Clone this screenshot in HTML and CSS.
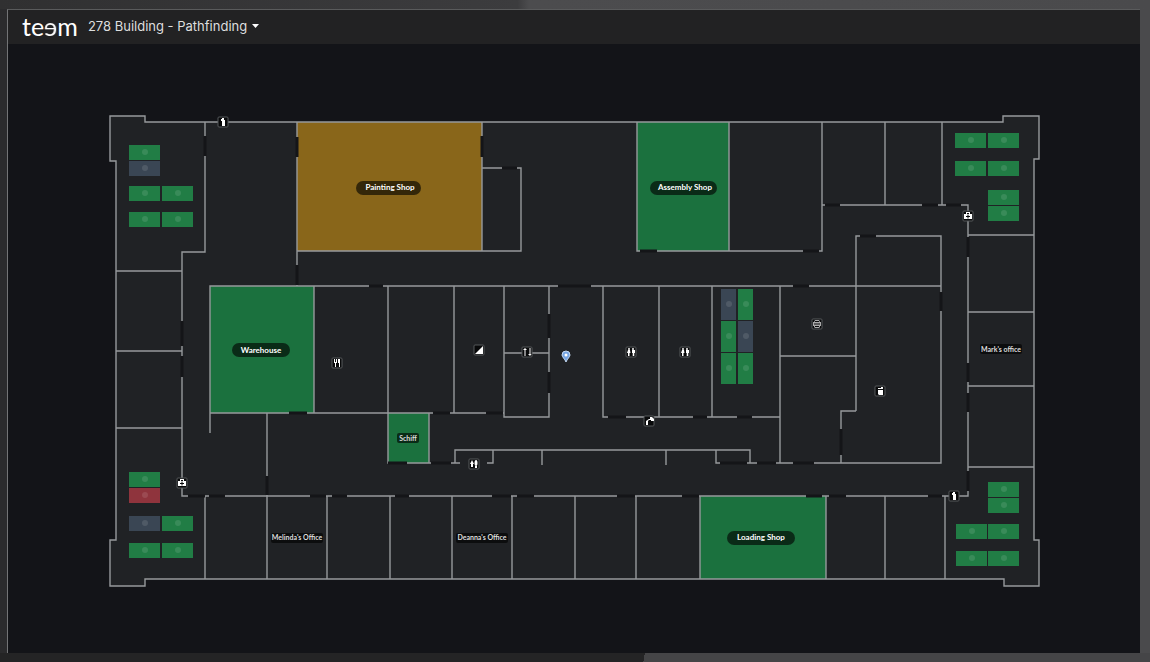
FILE: index.html
```
<!DOCTYPE html>
<html lang="en">
    <head>
        <meta charset="utf-8">
        <meta name="viewport" content="width=device-width">
        <title>278 Building - Pathfinding</title>
        <link rel="stylesheet" href="styles.css">
    </head>
    <body>
        <div class="screen">
            <header class="nav">
                <a class="logo" href="#">te<span class="turned">e</span>m</a>
                <button class="picker" type="button">278 Building - Pathfinding
                    <svg class="caret" width="7" height="4" viewBox="0 0 7 4"><path d="M0 0h7L3.500 4z"/></svg>
                </button>
            </header>
            <main class="map">
                <svg class="plan" viewBox="8 44 1132 609">
                    <defs>
                        <g id="desk"><rect width="31" height="15"/><circle class="seat" cx="16" cy="7" r="3"/></g>
                        <g id="desk-tall"><rect width="15" height="31"/><circle class="seat" cx="8" cy="15" r="3"/></g>
                        <rect id="box" class="box" x="-5" y="-5" width="10" height="10" rx="1"/>
                        <g id="wc">
                            <use href="#box"/>
                            <circle cx="-2" cy="-3" r="1"/><circle cx="2" cy="-3" r="1"/>
                            <path d="M-3-2h2l.5 3h-1v3h-1.500V1h-1zM1-2h3v3H3.300v3H1.700V1H1z"/>
                        </g>
                        <g id="aid">
                            <use href="#box"/>
                            <path d="M-4-2h2v-2h4v2h2v5h-8zM-1-3v1h2v-1z"/>
                            <path class="dark" d="M-.5-1.500h1v1.500h1.500v1H.5v1.500h-1V1H-2V0h1.500z"/>
                        </g>
                        <g id="extinguisher">
                            <use href="#box"/>
                            <path d="M-1-2h3v6h-3zM-1-4h2v2h-2zM-2-3h1v2h-1z"/>
                        </g>
                    </defs>

                    <path class="floor" d="M110 116H145V122H1003V116H1039V159H1034V540H1039V586H1004V579H145V586H110V540H116V161H110Z"/>

                    <!-- bookable rooms -->
                    <rect class="busy-soon" x="297" y="122" width="185" height="129"/>
                    <rect class="room" x="637" y="122" width="92" height="129"/>
                    <rect class="room" x="210" y="286" width="104" height="127"/>
                    <rect class="room" x="388" y="413" width="41" height="50"/>
                    <rect class="room" x="700" y="496" width="126" height="83"/>

                    <!-- walls -->
                    <path class="wall" d="M110 116H145V122H1003V116H1039V159H1034V540H1039V586H1004V579H145V586H110V540H116V161H110Z"/>
                    <path class="wall" d="M205 122V252H182V496H968V205H822M116 271H182M116 351H182M116 428H182
                        M297 122V286M482 122V251M297 251H521V168H482
                        M637 122V251H822V122M729 122V251M885 122V205M942 122V205
                        M968 235H1034M968 312H1034M968 386H1034M968 467H1034"/>
                    <path class="wall" d="M210 433V286H941M856 411V236H941V463H748M841 463V411H856M780 356H856
                        M314 286V413M210 413H504M267 413V496M388 286V463H460M429 413V463M454 286V413
                        M504 286V417H549V286M504 353H549M603 286V417H780M659 286V417M712 286V417M780 286V463
                        M455 463V450H750V463M493 450V463H487M542 450V465M666 450V465M716 450V463H748"/>
                    <path class="wall" d="M205 496V579M267 496V579M327 496V579M390 496V579M452 496V579M512 496V579M575 496V579
                        M636 496V579M700 496V579M826 496V579M885 496V579M945 496V579"/>

                    <!-- doors -->
                    <path class="door" d="M205 136V156M297 137V157M297 265V285M482 136V157M502 168H517M182 321V346M182 356V377
                        M640 251H657M803 251H819M825 205H840M922 205H938M946 205H961M860 236H876M941 292V311
                        M968 237V257M968 363V382M968 393V412M968 471V491M369 286H383M558 286H591M793 286H809
                        M289 413H307M433 413H450M486 413H503M267 476V495M549 314V338M549 372V393
                        M388 463H407M431 463H451M608 417H626M693 417H707M737 417H752M720 463H747M757 463H776M793 463H814M841 429V455
                        M188 496H205M209 496H225M310 496H326M332 496H347M395 496H409M492 496H511M517 496H534M617 496H635M682 496H699
                        M806 496H822M829 496H846M928 496H942"/>

                    <!-- desks -->
                    <g class="free">
                        <use href="#desk" x="129" y="145"/>
                        <use href="#desk" x="129" y="186"/><use href="#desk" x="162" y="186"/>
                        <use href="#desk" x="129" y="212"/><use href="#desk" x="162" y="212"/>
                        <use href="#desk" x="129" y="472"/>
                        <use href="#desk" x="162" y="516"/>
                        <use href="#desk" x="129" y="543"/><use href="#desk" x="162" y="543"/>
                        <use href="#desk" x="955" y="133"/><use href="#desk" x="988" y="133"/>
                        <use href="#desk" x="955" y="161"/><use href="#desk" x="988" y="161"/>
                        <use href="#desk" x="988" y="190"/><use href="#desk" x="988" y="206"/>
                        <use href="#desk" x="988" y="482"/><use href="#desk" x="988" y="498"/>
                        <use href="#desk" x="956" y="524"/><use href="#desk" x="988" y="524"/>
                        <use href="#desk" x="956" y="551"/><use href="#desk" x="988" y="551"/>
                        <use href="#desk-tall" x="738" y="289"/>
                        <use href="#desk-tall" x="721" y="321"/>
                        <use href="#desk-tall" x="721" y="353"/><use href="#desk-tall" x="738" y="353"/>
                    </g>
                    <g class="off">
                        <use href="#desk" x="129" y="161"/>
                        <use href="#desk" x="129" y="516"/>
                        <use href="#desk-tall" x="721" y="289"/>
                        <use href="#desk-tall" x="738" y="321"/>
                    </g>
                    <g class="taken"><use href="#desk" x="129" y="488"/></g>

                    <!-- points of interest -->
                    <g class="poi">
                        <use href="#extinguisher" x="223" y="122"/>
                        <use href="#extinguisher" x="954" y="496"/>
                        <use href="#aid" x="968" y="216"/>
                        <use href="#aid" x="182" y="483"/>
                        <use href="#wc" x="631" y="352"/>
                        <use href="#wc" x="685" y="352"/>
                        <!-- kitchen -->
                        <g transform="translate(337 363)">
                            <use href="#box"/>
                            <path d="M-3-4h1v3h1v-3h1v4h-1v4h-1V0h-1zM1-4h2v8h-1V0H1z"/>
                        </g>
                        <!-- stairs -->
                        <g transform="translate(479 350)">
                            <use href="#box"/>
                            <path d="M-4 4L4-4V4z"/>
                        </g>
                        <!-- lift -->
                        <g transform="translate(527 352)">
                            <use href="#box"/>
                            <path d="M-4-2l2-2 2 2h-1.500v6h-1v-6zM1 2l2 2 1.500-2H3.500v-6h-1v6z"/>
                        </g>
                        <!-- fountain -->
                        <g transform="translate(649 421)">
                            <use href="#box"/>
                            <path d="M-3 4v-4l3-2h1v-2h2l2 2v2H2v-1H0l-1 1v4z"/>
                        </g>
                        <!-- service lift -->
                        <g transform="translate(474 464)">
                            <use href="#box"/>
                            <path d="M-4 0l2-4 2 4h-1v3h-2V0z"/>
                            <ellipse cx="2" cy="-1" rx="1.500" ry="3"/><path d="M1 2h2v2H1z"/>
                        </g>
                        <!-- printer -->
                        <g class="muted" transform="translate(817 324)">
                            <use href="#box"/>
                            <path d="M-2-4h4l1 2h1v4H3v1L2 4h-4l-1-1V2h-1v-4h1zM-2-3v1h4v-1zM-3-.5v1h6v-1zM-2 2v1h4V2z" fill-rule="evenodd"/>
                        </g>
                        <!-- bin -->
                        <g transform="translate(880 391)">
                            <use href="#box"/>
                            <path d="M-2-1h5v5h-4l-1-1zM-2-3h3v-1h2v2h-5z"/>
                        </g>
                    </g>
                    <g class="pin" transform="translate(566 356)">
                        <path d="M0 6C-1 3-4 1-4-1A4 4 0 0 1 4-1C4 1 1 3 0 6z"/>
                        <circle cx="0" cy="-1" r="1.500"/>
                    </g>

                    <!-- labels -->
                    <g class="label">
                        <rect x="356" y="181" width="65" height="14" rx="7"/><text x="390" y="190">Painting Shop</text>
                        <rect x="650" y="181" width="67" height="14" rx="7"/><text x="685" y="190">Assembly Shop</text>
                        <rect x="232" y="343" width="58" height="14" rx="7"/><text x="261" y="353">Warehouse</text>
                        <rect x="727" y="531" width="68" height="14" rx="7"/><text x="761" y="540">Loading Shop</text>
                    </g>
                    <g class="label small">
                        <rect x="397" y="433" width="22" height="10" rx="2"/><text x="408" y="441">Schiff</text>
                        <rect x="271" y="533" width="52" height="10" rx="2"/><text x="297" y="540">Melinda's Office</text>
                        <rect x="456" y="533" width="52" height="10" rx="2"/><text x="482" y="540">Deanna's Office</text>
                        <rect x="980" y="344" width="42" height="10" rx="2"/><text x="1001" y="352">Mark's office</text>
                    </g>
                </svg>
            </main>
        </div>
    </body>
</html>
```
FILE: styles.css
```
*{box-sizing:border-box}
body{
    margin:0;
    min-height:100vh;
    display:flex;
    padding:9px 10px 9px 7px;
    background:
        linear-gradient(100deg, #242425 56%, #454547 56%) bottom / 100% 9px no-repeat,
        linear-gradient(90deg, #303031, #3c3c3e 45%, #4c4c4e 46%, #4a4a4c) top / 100% 9px no-repeat,
        linear-gradient(90deg, #2b2b2d 50%, #4a4a4c 50%);
    font-family:Lato, "Liberation Sans", sans-serif;
    color:#e8e8e8;
}
.screen
{
    flex:1;
    display:flex;
    flex-direction:column;
    background:#131418;
    border-left:1px solid #737476;
    border-top:1px solid #5a5b5c;
}
.nav
{
    display:flex;
    align-items:center;
    gap:10px;
    height:34px;
    padding:0 14px 2px;
    background:#222223;
}
.logo{font-size:25px;line-height:32px;color:#fff;text-decoration:none}
/* second e faces backwards in the wordmark */
.turned{display:inline-block;transform:rotateY(180deg)}
.picker
{
    display:flex;
    align-items:center;
    gap:5px;
    padding:0;
    border:none;
    background:none;
    color:#dededf;
    font:13px Inter, "Liberation Sans", sans-serif;
    cursor:pointer;
}
.caret{fill:#fff}
.map{flex:1;display:flex}
.plan{width:100%;height:auto}

.floor{fill:#202225}
.wall{fill:none;stroke:#96999c;stroke-width:1.4}
.door{fill:none;stroke:#141518;stroke-width:3}
.room{fill:#1b713e}
.busy-soon{fill:#89661a}

.free{fill:#217d45}
.off{fill:#3a4654}
.taken{fill:#8f343d}
.seat{fill:#fff;opacity:.11}

.poi{fill:#fff}
.muted{fill:#aaa}
.box{fill:#08090a;stroke:#55585a;stroke-width:1}
.dark{fill:#08090a}
.pin path{fill:#76a5e3;stroke:#c4d9f2;stroke-width:1}
.pin circle{fill:#fff}

.label rect{fill:#000;fill-opacity:.62}
.label text{fill:#fff;font:bold 8px Lato, "Liberation Sans", sans-serif;text-anchor:middle}
.label.small text{fill:#ddd;font-size:7px}
```
